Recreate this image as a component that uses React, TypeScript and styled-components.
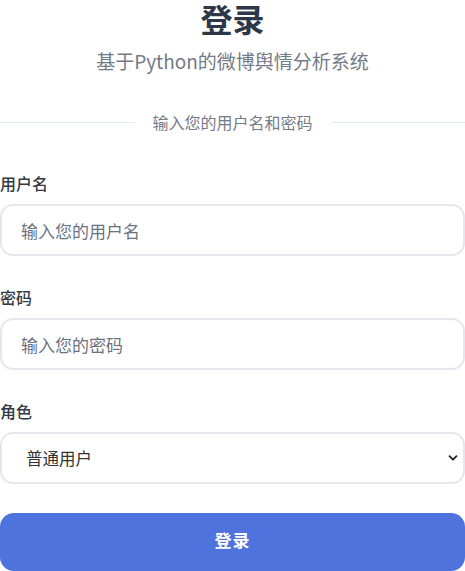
import React from "react";
import styled, { createGlobalStyle } from "styled-components";

const GlobalStyle = createGlobalStyle`
  html, body {
    margin: 0;
    padding: 0;
    background: #ffffff;
  }
  body {
    font-family: "Noto Sans CJK SC", "Noto Sans", sans-serif;
  }
  * { box-sizing: border-box; }
`;

const Page = styled.div`
  width: 465px;
  display: flex;
  flex-direction: column;
`;

const Header = styled.header`
  display: flex;
  flex-direction: column;
  align-items: center;
`;

const Title = styled.h1`
  margin: 0;
  font-size: 32px;
  line-height: 36px;
  font-weight: 700;
  color: #2d3748;
`;

const Subtitle = styled.p`
  margin: 13px 0 0;
  font-size: 19px;
  line-height: 24px;
  color: #737b88;
`;

const Divider = styled.div`
  margin-top: 39px;
  display: flex;
  align-items: center;
  gap: 18px;
  &::before, &::after {
    content: "";
    flex: 1;
    height: 1px;
    background: #e2e8f0;
  }
`;

const DividerText = styled.span`
  font-size: 16px;
  line-height: 20px;
  color: #737b88;
`;

const Form = styled.form`
  margin-top: 41px;
  display: flex;
  flex-direction: column;
  gap: 31px;
`;

const Field = styled.div`
  display: flex;
  flex-direction: column;
  gap: 11px;
`;

const Label = styled.label`
  font-size: 16px;
  line-height: 20px;
  font-weight: 500;
  color: #333a44;
`;

const Input = styled.input`
  width: 100%;
  height: 52px;
  border: 2px solid #e5e7ee;
  border-radius: 13px;
  padding: 0 19px;
  font-family: inherit;
  font-size: 17px;
  color: #2d3748;
  background: #fff;
  outline: none;
  &::placeholder {
    color: #6b7280;
  }
`;

const SelectWrap = styled.div`
  position: relative;
`;

const Select = styled.select`
  width: 100%;
  height: 52px;
  border: 2px solid #e5e7ee;
  border-radius: 13px;
  padding: 0 24px;
  font-family: inherit;
  font-size: 16.5px;
  color: #333333;
  background: #fff;
  appearance: none;
  outline: none;
`;

const Chevron = styled.svg`
  position: absolute;
  right: 7px;
  top: 50%;
  width: 10px;
  height: 10px;
  transform: translateY(-50%);
  pointer-events: none;
`;

const Button = styled.button`
  margin-top: -2px;
  width: 100%;
  height: 58px;
  padding: 0 0 5px;
  border: none;
  border-radius: 14px;
  background: #4f73dc;
  color: #ffffff;
  font-family: inherit;
  font-size: 17px;
  font-weight: 700;
  letter-spacing: 1px;
`;

export default function App() {
  return (
    <>
      <GlobalStyle />
      <Page>
        <Header>
          <Title>登录</Title>
          <Subtitle>基于Python的微博舆情分析系统</Subtitle>
        </Header>
        <Divider>
          <DividerText>输入您的用户名和密码</DividerText>
        </Divider>
        <Form onSubmit={(e) => e.preventDefault()}>
          <Field>
            <Label htmlFor="username">用户名</Label>
            <Input id="username" type="text" placeholder="输入您的用户名" />
          </Field>
          <Field>
            <Label htmlFor="password">密码</Label>
            <Input id="password" type="password" placeholder="输入您的密码" />
          </Field>
          <Field>
            <Label htmlFor="role">角色</Label>
            <SelectWrap>
              <Select id="role" defaultValue="user">
                <option value="user">普通用户</option>
                <option value="admin">管理员</option>
              </Select>
              <Chevron viewBox="0 0 10 10">
                <path d="M1.5 3.2 L5 6.7 L8.5 3.2" fill="none" stroke="#222" strokeWidth="1.8" strokeLinecap="round" strokeLinejoin="round" />
              </Chevron>
            </SelectWrap>
          </Field>
          <Button type="submit">登录</Button>
        </Form>
      </Page>
    </>
  );
}
